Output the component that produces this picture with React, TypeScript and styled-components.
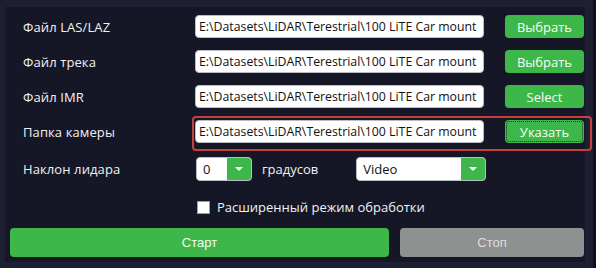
import styled, { createGlobalStyle } from 'styled-components';

const Global = createGlobalStyle`
  html, body {
    margin: 0;
    padding: 0;
    background: #1d2032;
  }
  * {
    box-sizing: border-box;
  }
`;

const Frame = styled.div`
  width: 596px;
  height: 268px;
  padding: 7px 8px 6px 5px;
  background: #1d2032;
  border-right: 3px solid #0e0f1a;
`;

const Panel = styled.div`
  height: 100%;
  background: #151727;
  padding: 8px 0 0 5px;
  display: flex;
  flex-direction: column;
  font-family: 'Open Sans', 'Liberation Sans', sans-serif;
  color: #f2f2f2;
`;

const Row = styled.div<{ $mark?: boolean }>`
  position: relative;
  display: grid;
  grid-template-columns: 151px 289px 79px;
  column-gap: 21px;
  align-items: center;
  height: 23px;
  padding-left: 13px;
  margin-bottom: 12px;

  ${(p) =>
    p.$mark &&
    `
    &::after {
      content: '';
      position: absolute;
      left: 182px;
      top: -4px;
      width: 396px;
      height: 31px;
      border: 2px solid #c8403c;
      border-radius: 4px;
      pointer-events: none;
    }
  `}
`;

const Label = styled.div<{ $w?: number }>`
  font-size: 13px;
  letter-spacing: 0.1px;
  white-space: nowrap;
  ${(p) => p.$w && `width: ${p.$w}px;`}
`;

const PathInput = styled.div`
  height: 23px;
  background: #ffffff;
  border: 1px solid #b9bcc4;
  border-radius: 4px;
  color: #111;
  font-size: 12.3px;
  line-height: 21px;
  padding-left: 3px;
  white-space: nowrap;
  overflow: hidden;
`;

const PickButton = styled.button<{ $focus?: boolean }>`
  height: 23px;
  border: none;
  border-radius: 4px;
  background: #3db64a;
  color: #f4fff4;
  font-family: 'Open Sans', 'Liberation Sans', sans-serif;
  font-size: 13px;
  padding: 0;
  ${(p) =>
    p.$focus &&
    `
    outline: 1px dotted #1d3a20;
    outline-offset: -2px;
  `}
`;

const TiltRow = styled.div`
  display: flex;
  align-items: center;
  height: 24px;
  padding-left: 13px;
  margin-top: 2px;
`;

const Combo = styled.div<{ $w: number }>`
  width: ${(p) => p.$w}px;
  height: 24px;
  display: flex;
  background: #fff;
  border: 1px solid #b9bcc4;
  border-radius: 4px;
  overflow: hidden;
  color: #111;
  font-size: 13px;
`;

const ComboText = styled.div`
  flex: 1;
  line-height: 22px;
  padding-left: 6px;
`;

const ComboArrow = styled.div`
  width: 24px;
  background: #3db64a;
  display: flex;
  align-items: center;
  justify-content: center;

  &::before {
    content: '';
    border-left: 4px solid transparent;
    border-right: 4px solid transparent;
    border-top: 4px solid #fff;
  }
`;

const Unit = styled.div`
  font-size: 13px;
  margin: 0 38px 0 10px;
`;

const CheckRow = styled.label`
  display: flex;
  align-items: center;
  gap: 7px;
  margin: 18px 0 0 187px;
  font-size: 13px;
  height: 16px;
`;

const Box = styled.span`
  width: 13px;
  height: 13px;
  background: #fff;
  border: 1px solid #9a9da6;
`;

const Actions = styled.div`
  display: grid;
  grid-template-columns: 379px 184px;
  column-gap: 11px;
  margin-top: 13px;
`;

const BigButton = styled.button<{ $stop?: boolean }>`
  height: 29px;
  border: none;
  border-radius: 4px;
  background: ${(p) => (p.$stop ? '#8f9090' : '#3db64a')};
  color: ${(p) => (p.$stop ? '#dedede' : '#f4fff4')};
  font-family: 'Liberation Sans', Arial, sans-serif;
  font-size: 13px;
`;

const PATH = 'E:\\Datasets\\LiDAR\\Terestrial\\100 LiTE Car mount';

const files = [
  { label: 'Файл LAS/LAZ', action: 'Выбрать' },
  { label: 'Файл трека', action: 'Выбрать' },
  { label: 'Файл IMR', action: 'Select' },
  { label: 'Папка камеры', action: 'Указать', mark: true },
];

const App = () => {
  return (
    <Frame>
      <Global />
      <Panel>
        {files.map((f) => (
          <Row key={f.label} $mark={f.mark}>
            <Label>{f.label}</Label>
            <PathInput>{PATH}</PathInput>
            <PickButton $focus={f.mark}>{f.action}</PickButton>
          </Row>
        ))}
        <TiltRow>
          <Label $w={173}>Наклон лидара</Label>
          <Combo $w={56}>
            <ComboText>0</ComboText>
            <ComboArrow />
          </Combo>
          <Unit>градусов</Unit>
          <Combo $w={130}>
            <ComboText>Video</ComboText>
            <ComboArrow />
          </Combo>
        </TiltRow>
        <CheckRow>
          <Box />
          Расширенный режим обработки
        </CheckRow>
        <Actions>
          <BigButton>Старт</BigButton>
          <BigButton $stop>Стоп</BigButton>
        </Actions>
      </Panel>
    </Frame>
  );
};

export default App;
